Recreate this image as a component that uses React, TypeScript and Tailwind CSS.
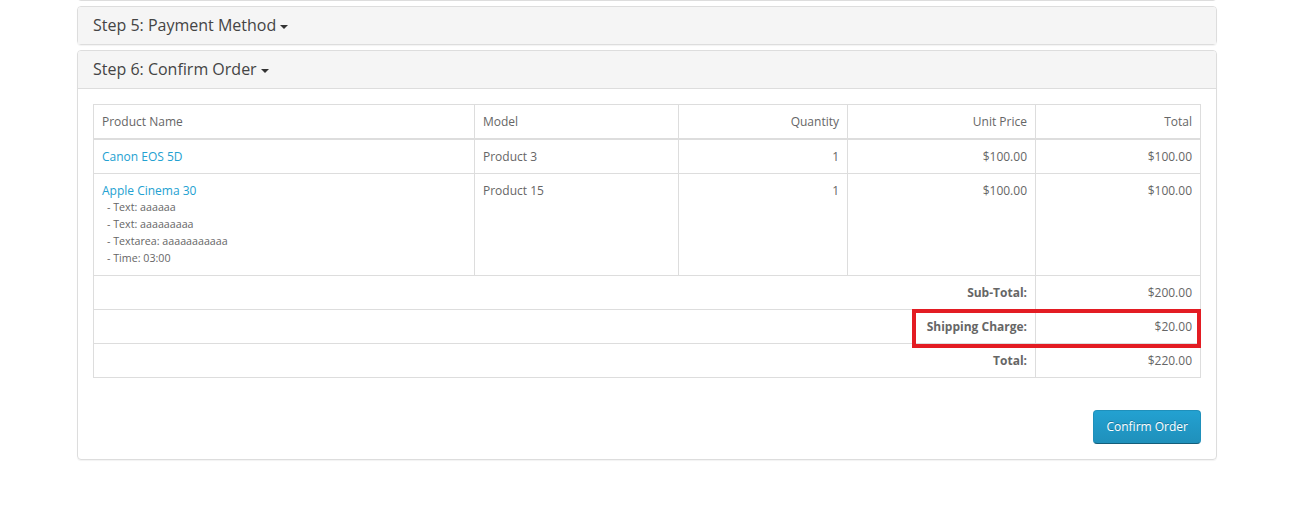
import React from 'react';

const font = { fontFamily: '"Open Sans", "Liberation Sans", sans-serif' };

const Caret = () => (
  <span className="inline-block ml-[4px] align-middle w-0 h-0 border-t-[4px] border-t-[#333] border-x-[4px] border-x-transparent" />
);

const PanelHeading = ({ title }: { title: string }) => (
  <div className="bg-[#f5f5f5] px-[15px] py-[10px] rounded-t-[3px]">
    <h4 className="text-[16px] leading-[17px] text-[#444]">
      {title}
      <Caret />
    </h4>
  </div>
);

const td = 'border border-[#ddd] px-[8px] py-[8px] align-top leading-[17px]';

const options = ['- Text: aaaaaa', '- Text: aaaaaaaaa', '- Textarea: aaaaaaaaaaa', '- Time: 03:00'];

export default function App() {
  return (
    <div className="w-[1306px] h-[508px] bg-white overflow-hidden text-[12px] text-[#666]" style={font}>
      <div className="ml-[77px] w-[1140px]">
        {/* tail of the previous step */}
        <div className="-mt-[19px] h-[20px] border border-[#ddd] rounded-[4px] bg-white" />

        <div className="mt-[5px] border border-[#ddd] rounded-[4px] shadow-[0_1px_1px_rgba(0,0,0,0.05)]">
          <PanelHeading title="Step 5: Payment Method" />
        </div>

        <div className="mt-[5px] border border-[#ddd] rounded-[4px] shadow-[0_1px_1px_rgba(0,0,0,0.05)]">
          <PanelHeading title="Step 6: Confirm Order" />
          <div className="p-[15px] border-t border-[#ddd]">
            <div className="relative">
              <table className="w-full border-collapse">
                <thead>
                  <tr>
                    <td className={`${td} text-left w-[381px] border-b-2`}>Product Name</td>
                    <td className={`${td} text-left w-[204px] border-b-2`}>Model</td>
                    <td className={`${td} text-right w-[169px] border-b-2`}>Quantity</td>
                    <td className={`${td} text-right w-[188px] border-b-2`}>Unit Price</td>
                    <td className={`${td} text-right border-b-2`}>Total</td>
                  </tr>
                </thead>
                <tbody>
                  <tr>
                    <td className={`${td} text-left`}>
                      <a className="text-[#23a1d1]">Canon EOS 5D</a>
                    </td>
                    <td className={`${td} text-left`}>Product 3</td>
                    <td className={`${td} text-right`}>1</td>
                    <td className={`${td} text-right`}>$100.00</td>
                    <td className={`${td} text-right`}>$100.00</td>
                  </tr>
                  <tr>
                    <td className={`${td} text-left`}>
                      <a className="text-[#23a1d1]">Apple Cinema 30</a>
                      {options.map((o) => (
                        <div key={o} className="text-[10.7px] leading-[17px] pl-[5px]">{o}</div>
                      ))}
                    </td>
                    <td className={`${td} text-left`}>Product 15</td>
                    <td className={`${td} text-right`}>1</td>
                    <td className={`${td} text-right`}>$100.00</td>
                    <td className={`${td} text-right`}>$100.00</td>
                  </tr>
                </tbody>
                <tfoot>
                  {[
                    ['Sub-Total:', '$200.00'],
                    ['Shipping Charge:', '$20.00'],
                    ['Total:', '$220.00'],
                  ].map(([k, v]) => (
                    <tr key={k}>
                      <td colSpan={4} className={`${td} text-right font-bold`}>{k}</td>
                      <td className={`${td} text-right`}>{v}</td>
                    </tr>
                  ))}
                </tfoot>
              </table>
              {/* annotation */}
              <div className="absolute left-[819px] top-[205px] w-[289px] h-[39px] border-[4px] border-[#e31c23]" />
            </div>
            <div className="flex justify-end mt-[32px]">
              <button className="h-[34px] px-[12px] rounded-[4px] border border-[#1f90bb] border-b-[#145e7a] bg-gradient-to-b from-[#23a1d1] to-[#1f90bb] text-white text-[12px] [text-shadow:0_-1px_0_rgba(0,0,0,0.25)]">
                Confirm Order
              </button>
            </div>
          </div>
        </div>
      </div>
    </div>
  );
}
